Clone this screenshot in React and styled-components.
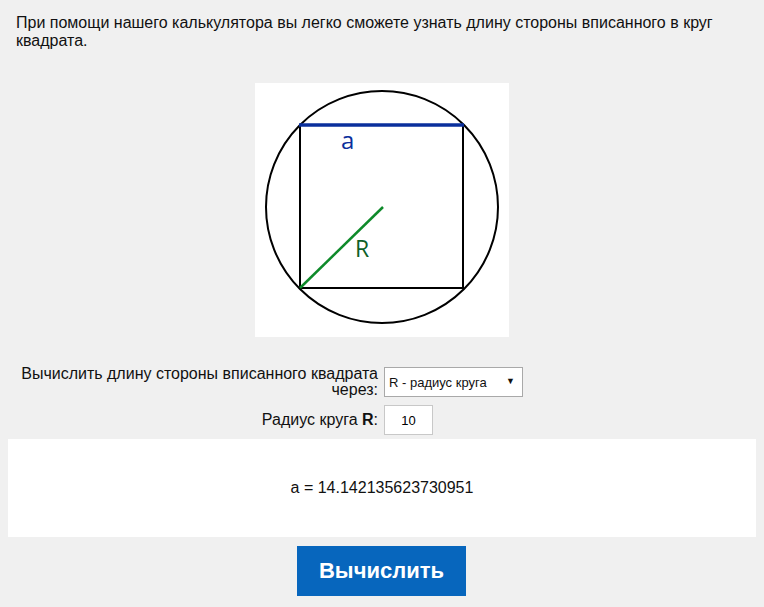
import React from "react";
import styled, { createGlobalStyle } from "styled-components";

const Global = createGlobalStyle`
  html, body { background: #f0f0f0; }
  body {
    margin: 8px;
    font-family: "Liberation Sans", Arial, sans-serif;
    color: #111;
  }
`;

const Page = styled.div`
  display: flex;
  flex-direction: column;
  align-items: stretch;
`;

const Intro = styled.p`
  margin: 6px 0 0;
  padding: 0 8px;
  font-size: 16px;
  line-height: 18px;
`;

const Figure = styled.div`
  align-self: center;
  margin-top: 33px;
  width: 254px;
  height: 254px;
  background: #fff;
`;

const Form = styled.div`
  margin-top: 29px;
  display: grid;
  grid-template-columns: 362px auto;
  column-gap: 6px;
  row-gap: 7px;
  padding-left: 8px;
  align-items: center;
`;

const Label = styled.label`
  justify-self: end;
  text-align: right;
  font-size: 16px;
  line-height: 16px;
`;

const SelectWrap = styled.div`
  position: relative;
  width: 139px;
  height: 30px;
`;

const Select = styled.select`
  appearance: none;
  -webkit-appearance: none;
  width: 100%;
  height: 100%;
  box-sizing: border-box;
  border: 1px solid #a9a9a9;
  background: #fff;
  font-family: "Liberation Sans", Arial, sans-serif;
  font-size: 13px;
  color: #111;
  padding: 0 0 0 4px;
  margin: 0;
  border-radius: 0;
  outline: none;
`;

const Arrow = styled.span`
  position: absolute;
  right: 8px;
  top: 9px;
  font-size: 9px;
  pointer-events: none;
  color: #111;
`;

const Input = styled.input`
  width: 49px;
  height: 30px;
  box-sizing: border-box;
  border: 1px solid #c8c8c8;
  background: #fff;
  font-family: "Liberation Sans", Arial, sans-serif;
  font-size: 13px;
  text-align: center;
  padding: 0;
  margin: 0;
  outline: none;
`;

const Result = styled.div`
  margin-top: 4px;
  height: 98px;
  background: #fff;
  display: flex;
  align-items: center;
  justify-content: center;
  font-size: 16px;
`;

const Button = styled.button`
  align-self: center;
  margin-top: 9px;
  margin-left: -1px;
  width: 169px;
  height: 50px;
  border: none;
  background: #0766bd;
  color: #fff;
  font-family: "Liberation Sans", Arial, sans-serif;
  font-weight: bold;
  font-size: 22px;
  cursor: pointer;
`;

function Diagram() {
  return (
    <svg width="254" height="254" viewBox="0 0 254 254">
      <circle cx="127" cy="124" r="116" fill="none" stroke="#000" strokeWidth="2" />
      <rect x="45" y="42" width="163" height="163" fill="none" stroke="#000" strokeWidth="2" />
      <line x1="44" y1="42" x2="209" y2="42" stroke="#0a2f9c" strokeWidth="3.5" />
      <line x1="45" y1="205" x2="128" y2="124" stroke="#0e8a2a" strokeWidth="2.5" />
      <text x="86" y="66" fontFamily="'Open Sans', 'DejaVu Sans', sans-serif" fontSize="24" fill="#0a2f9c">a</text>
      <text x="100" y="174" fontFamily="'Open Sans', 'DejaVu Sans', sans-serif" fontSize="23" fill="#0e5f28">R</text>
    </svg>
  );
}

export default function App() {
  return (
    <Page>
      <Global />
      <Intro>
        При помощи нашего калькулятора вы легко сможете узнать длину стороны вписанного в круг квадрата.
      </Intro>
      <Figure>
        <Diagram />
      </Figure>
      <Form>
        <Label htmlFor="via">Вычислить длину стороны вписанного квадрата через:</Label>
        <SelectWrap>
          <Select id="via" defaultValue="r">
            <option value="r">R - радиус круга</option>
          </Select>
          <Arrow>▼</Arrow>
        </SelectWrap>
        <Label htmlFor="rad">
          Радиус круга <b>R</b>:
        </Label>
        <Input id="rad" defaultValue="10" />
      </Form>
      <Result>a = 14.142135623730951</Result>
      <Button>Вычислить</Button>
    </Page>
  );
}
